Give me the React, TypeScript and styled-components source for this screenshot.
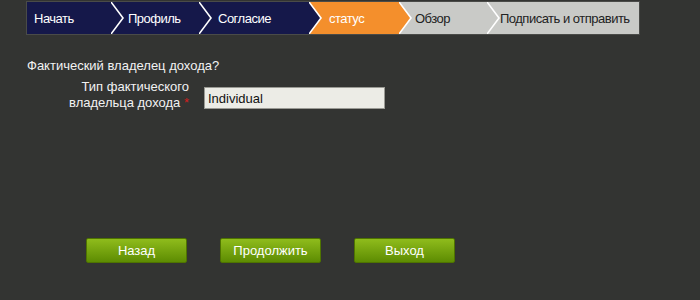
import styled, { createGlobalStyle } from 'styled-components'

const GlobalStyle = createGlobalStyle`
  body {
    margin: 0;
    background: #333432;
    font-family: 'Liberation Sans', Arial, sans-serif;
  }
`

type Tone = 'done' | 'active' | 'todo'

const toneColor: Record<Tone, string> = {
  done: '#15184a',
  active: '#f48f2c',
  todo: '#c9cac7',
}

const steps: { label: string; tone: Tone; width: number; inset: number }[] = [
  { label: 'Начать', tone: 'done', width: 85, inset: 7 },
  { label: 'Профиль', tone: 'done', width: 88, inset: 16 },
  { label: 'Согласие', tone: 'done', width: 110, inset: 18 },
  { label: 'статус', tone: 'active', width: 90, inset: 19 },
  { label: 'Обзор', tone: 'todo', width: 88, inset: 15 },
  { label: 'Подписать и отправить', tone: 'todo', width: 151, inset: 12 },
]

export default function App() {
  return (
    <>
      <GlobalStyle />
      <Page>
        <Steps>
          {steps.map((step, i) => (
            <Step key={step.label} $tone={step.tone} $width={step.width} $inset={step.inset}>
              {step.label}
              {i < steps.length - 1 && (
                <Chevron width="14" height="32" viewBox="0 0 14 32">
                  <polygon points="0,0 12,16 0,32" fill={toneColor[step.tone]} />
                  <polyline points="0,0 12,16 0,32" fill="none" stroke="#fff" strokeWidth="1.6" />
                </Chevron>
              )}
            </Step>
          ))}
        </Steps>

        <Question>Фактический владелец дохода?</Question>

        <FieldRow>
          <Label>
            Тип фактического
            <br />
            владельца дохода <Required>*</Required>
          </Label>
          <Input defaultValue="Individual" />
        </FieldRow>

        <Buttons>
          <Button>Назад</Button>
          <Button>Продолжить</Button>
          <Button>Выход</Button>
        </Buttons>
      </Page>
    </>
  )
}

const Page = styled.div`
  width: 700px;
  height: 300px;
  padding: 2px 0 0 27px;
  box-sizing: border-box;
  display: flex;
  flex-direction: column;
`

const Steps = styled.div`
  display: flex;
  width: 612px;
  height: 32px;
  outline: 1px solid #4a4b48;
`

const Step = styled.div<{ $tone: Tone; $width: number; $inset: number }>`
  position: relative;
  display: flex;
  align-items: center;
  box-sizing: border-box;
  width: ${(p) => p.$width}px;
  padding-left: ${(p) => p.$inset}px;
  background: ${(p) => toneColor[p.$tone]};
  color: ${(p) => (p.$tone === 'todo' ? '#222' : '#fff')};
  font-size: 13px;
  letter-spacing: -0.5px;
  white-space: nowrap;
`

const Chevron = styled.svg`
  position: absolute;
  top: 0;
  right: -13px;
  z-index: 1;
`

const Question = styled.div`
  margin-top: 24px;
  color: #f2f2f2;
  font-size: 13px;
  line-height: 15px;
`

const FieldRow = styled.div`
  display: flex;
  align-items: flex-start;
  gap: 15px;
  margin-top: 6px;
`

const Label = styled.div`
  width: 162px;
  text-align: right;
  color: #f2f2f2;
  font-size: 13px;
  line-height: 16px;
`

const Required = styled.span`
  color: #d21f1f;
`

const Input = styled.input`
  margin-top: 8px;
  width: 181px;
  height: 22px;
  box-sizing: border-box;
  padding: 0 3px;
  border: 1px solid #9a9a94;
  background: #ecece6;
  color: #111;
  font-family: 'Liberation Sans', Arial, sans-serif;
  font-size: 13px;
  outline: none;
`

const Buttons = styled.div`
  display: flex;
  gap: 33px;
  margin-top: 127px;
  padding-left: 59px;
`

const Button = styled.button`
  width: 101px;
  height: 25px;
  border: 1px solid #4f7400;
  border-radius: 2px;
  background: linear-gradient(#8fbc1c, #5d8c02);
  color: #fff;
  font-family: 'Liberation Sans', Arial, sans-serif;
  font-size: 13px;
  cursor: pointer;
`
